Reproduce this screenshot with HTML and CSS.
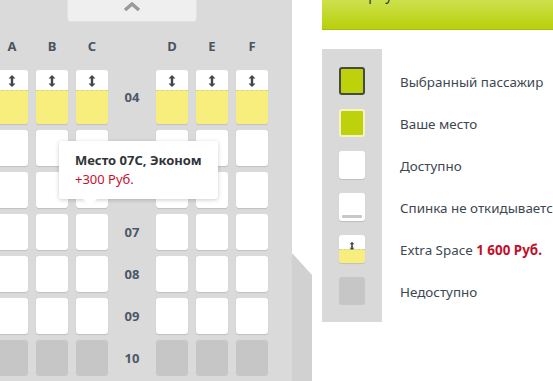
FILE: index.html
```html
<!DOCTYPE html>
<html lang="ru">
<head>
  <meta charset="UTF-8">
  <title>Выбор места</title>
  <link rel="stylesheet" href="styles.css">
</head>
<body>
  <div class="page">
    <div class="fuselage">
      <div class="nose">
        <button class="scroll-up">
          <svg width="18" height="10" viewBox="0 0 18 10"><path d="M2 9 L9 3 L16 9" fill="none" stroke="#9a9a9a" stroke-width="3.5"/></svg>
        </button>
      </div>
      <div class="seatmap">
        <div class="col-label">A</div>
        <div class="col-label">B</div>
        <div class="col-label">C</div>
        <div class="col-label"></div>
        <div class="col-label">D</div>
        <div class="col-label">E</div>
        <div class="col-label">F</div>

        <div class="seat extra"><span class="arrow"></span></div>
        <div class="seat extra"><span class="arrow"></span></div>
        <div class="seat extra"><span class="arrow"></span></div>
        <div class="row-num">04</div>
        <div class="seat extra"><span class="arrow"></span></div>
        <div class="seat extra"><span class="arrow"></span></div>
        <div class="seat extra"><span class="arrow"></span></div>

        <div class="seat"></div><div class="seat"></div><div class="seat"></div>
        <div class="row-num"></div>
        <div class="seat"></div><div class="seat"></div><div class="seat"></div>

        <div class="seat"></div><div class="seat"></div><div class="seat"></div>
        <div class="row-num"></div>
        <div class="seat"></div><div class="seat"></div><div class="seat"></div>

        <div class="seat"></div><div class="seat"></div>
        <div class="seat hovered">
          <div class="tooltip">
            <div class="tooltip-title">Место 07С, Эконом</div>
            <div class="tooltip-price">+300 Руб.</div>
          </div>
        </div>
        <div class="row-num">07</div>
        <div class="seat"></div><div class="seat"></div><div class="seat"></div>

        <div class="seat"></div><div class="seat"></div><div class="seat"></div>
        <div class="row-num">08</div>
        <div class="seat"></div><div class="seat"></div><div class="seat"></div>

        <div class="seat"></div><div class="seat"></div><div class="seat"></div>
        <div class="row-num">09</div>
        <div class="seat"></div><div class="seat"></div><div class="seat"></div>

        <div class="seat busy"></div><div class="seat busy"></div><div class="seat busy"></div>
        <div class="row-num">10</div>
        <div class="seat busy"></div><div class="seat busy"></div><div class="seat busy"></div>
      </div>
    </div>

    <div class="wing"></div>

    <div class="sidebar">
      <div class="step-header"><span class="step-title">2. Вернуться</span></div>
      <div class="legend">
        <div class="legend-item">
          <div class="legend-icon"><span class="mark selected"></span></div>
          <div class="legend-text">Выбранный пассажир</div>
        </div>
        <div class="legend-item">
          <div class="legend-icon"><span class="mark mine"></span></div>
          <div class="legend-text">Ваше место</div>
        </div>
        <div class="legend-item">
          <div class="legend-icon"><span class="mark free"></span></div>
          <div class="legend-text">Доступно</div>
        </div>
        <div class="legend-item">
          <div class="legend-icon"><span class="mark fixed"></span></div>
          <div class="legend-text">Спинка не откидывается</div>
        </div>
        <div class="legend-item">
          <div class="legend-icon"><span class="mark extra-mark"><span class="arrow"></span></span></div>
          <div class="legend-text">Extra Space <b class="price">1 600 Руб.</b></div>
        </div>
        <div class="legend-item">
          <div class="legend-icon"><span class="mark na"></span></div>
          <div class="legend-text">Недоступно</div>
        </div>
      </div>
    </div>
  </div>
</body>
</html>
```

FILE: styles.css
```css
body {
  margin: 0;
  font-family: "Noto Sans", sans-serif;
  color: #3d4852;
  background-color: #FFF;
  overflow: hidden;
}
.page {
  display: flex;
  width: 553px;
  height: 381px;
  overflow: hidden;
}
.fuselage {
  flex: none;
  width: 296px;
  margin-left: -4px;
  background-color: #dadada;
}
.nose {
  display: flex;
  justify-content: center;
  padding-right: 24px;
}
.scroll-up {
  width: 130px;
  height: 22px;
  padding: 1px 0 0;
  border: 1px solid #e3e3e3;
  border-top: none;
  border-radius: 0 0 4px 4px;
  background-color: #efefef;
  display: flex;
  justify-content: center;
  align-items: flex-start;
}
.seatmap {
  display: grid;
  grid-template-columns: repeat(7, 32px);
  grid-template-rows: 26px 54px;
  grid-auto-rows: 36px;
  column-gap: 8px;
  row-gap: 6px;
  margin-top: 16px;
}
.col-label {
  font-size: 13px;
  font-weight: bold;
  text-align: center;
  line-height: 16px;
  color: #4a5560;
  align-self: start;
}
.seat {
  position: relative;
  background-color: #FFF;
  border-radius: 3px;
  box-shadow: 0 1px 1px rgba(0, 0, 0, 0.12);
}
.seat.busy {
  background-color: #c6c6c6;
  box-shadow: none;
}
.seat.extra {
  background: linear-gradient(#FFF 0, #FFF 20px, #f8ee7d 20px);
  text-align: center;
}
.seat.extra::after {
  content: "";
  position: absolute;
  left: 0;
  right: 0;
  top: 20px;
  border-top: 1px dashed #d6cf96;
}
.arrow {
  display: inline-block;
  width: 8px;
  height: 12px;
  margin-top: 3px;
  background: url("data:image/svg+xml,%3Csvg xmlns='http://www.w3.org/2000/svg' width='8' height='12'%3E%3Cpath d='M4 0 L7.5 3.5 H5.2 V8.5 H7.5 L4 12 L0.5 8.5 H2.8 V3.5 H0.5 Z' fill='%233f4850'/%3E%3C/svg%3E") no-repeat;
}
.row-num {
  font-size: 13px;
  font-weight: bold;
  color: #4b5866;
  display: flex;
  align-items: center;
  justify-content: center;
}
.tooltip {
  position: absolute;
  left: -17px;
  bottom: 51px;
  width: 127px;
  padding: 10px 16px 10px;
  background-color: #FFF;
  border-radius: 3px;
  box-shadow: 0 1px 4px rgba(0, 0, 0, 0.2);
  font-size: 13px;
  line-height: 19px;
  white-space: nowrap;
  z-index: 2;
}
.tooltip::after {
  content: "";
  position: absolute;
  left: 24px;
  bottom: -7px;
  border-left: 7px solid transparent;
  border-right: 7px solid transparent;
  border-top: 7px solid #FFF;
}
.tooltip-title {
  font-weight: bold;
  color: #2f3439;
}
.tooltip-price {
  color: #c8102e;
}
.wing {
  flex: none;
  width: 20px;
  margin-top: 253px;
  background-color: #d1d1d1;
  clip-path: polygon(0 0, 100% 22px, 100% 100%, 0 100%);
}
.sidebar {
  flex: none;
  width: 231px;
  margin-left: 10px;
}
.step-header {
  height: 29px;
  border-bottom: 1px solid #a8bd0c;
  background: linear-gradient(#cde14c, #b8d00c);
  padding-left: 14px;
  overflow: hidden;
}
.step-title {
  display: block;
  font-size: 14px;
  line-height: 16px;
  margin-top: -13px;
  color: #2f3439;
}
.legend {
  margin-top: 19px;
  background-color: #d9d9d9;
  width: 60px;
  padding: 18px 0 17px;
  display: flex;
  flex-direction: column;
  gap: 14px;
}
.legend-item {
  display: flex;
  align-items: center;
  height: 28px;
}
.legend-icon {
  flex: none;
  width: 60px;
  display: flex;
  justify-content: center;
}
.legend-text {
  flex: none;
  margin-left: 18px;
  margin-top: 2px;
  font-size: 13.4px;
  white-space: nowrap;
  color: #3d4852;
}
.price {
  color: #c0102a;
}
.mark {
  display: block;
  box-sizing: border-box;
  width: 26px;
  height: 28px;
  border-radius: 3px;
  background-color: #FFF;
  box-shadow: 0 1px 1px rgba(0, 0, 0, 0.12);
  position: relative;
  text-align: center;
}
.mark.selected {
  background-color: #bdd20a;
  border: 2px solid #464a44;
  box-shadow: none;
}
.mark.mine {
  background-color: #bdd20a;
  border: 2px solid #f6f3c0;
  box-shadow: none;
}
.mark.fixed::after {
  content: "";
  position: absolute;
  left: 3px;
  right: 3px;
  bottom: 3px;
  height: 3px;
  background-color: #c8c8c8;
  border-radius: 1px;
}
.mark.extra-mark {
  background: linear-gradient(#FFF 0, #FFF 14px, #f8ee7d 14px);
}
.mark.extra-mark .arrow {
  margin-top: 1px;
  transform: scale(0.7);
}
.mark.extra-mark::after {
  content: "";
  position: absolute;
  left: 0;
  right: 0;
  top: 14px;
  border-top: 1px dashed #d6cf96;
}
.mark.na {
  background-color: #c6c6c6;
  box-shadow: none;
}
```
